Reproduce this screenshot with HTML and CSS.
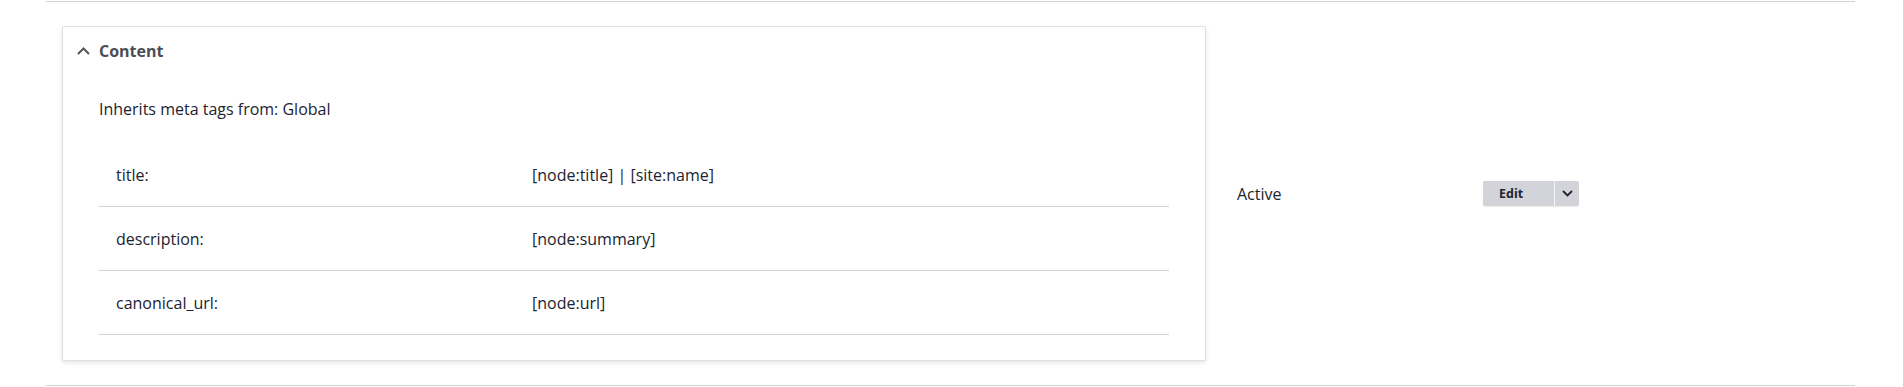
FILE: index.html
```html
<!DOCTYPE html>
<html lang="en">
<head>
<meta charset="utf-8">
<title>Metatag defaults</title>
<link rel="stylesheet" href="styles.css">
</head>
<body>
<div class="row">
  <div class="cell cell-main">
    <div class="details">
      <div class="summary">
        <svg class="caret" width="13" height="8" viewBox="0 0 13 8"><path d="M1 7 L6.5 1.5 L12 7" fill="none" stroke="#55565b" stroke-width="2"/></svg>
        <span>Content</span>
      </div>
      <div class="details-body">
        <p class="inherits">Inherits meta tags from: Global</p>
        <div class="tags">
          <div class="tag-row"><span class="k">title:</span><span class="v">[node:title] | [site:name]</span></div>
          <div class="tag-row"><span class="k">description:</span><span class="v">[node:summary]</span></div>
          <div class="tag-row"><span class="k">canonical_url:</span><span class="v">[node:url]</span></div>
        </div>
      </div>
    </div>
  </div>
  <div class="cell cell-status">Active</div>
  <div class="cell cell-ops">
    <div class="dropbutton">
      <span class="db-main">Edit</span>
      <span class="db-toggle"><svg width="11" height="7" viewBox="0 0 11 7"><path d="M1 1 L5.5 5.5 L10 1" fill="none" stroke="#222330" stroke-width="1.8"/></svg></span>
    </div>
  </div>
</div>
</body>
</html>
```
FILE: styles.css
```css
html, body {
  margin: 0;
  padding: 0;
  background: #fff;
}
body {
  font-family: "Open Sans", "Liberation Sans", sans-serif;
  font-size: 16px;
  color: #222330;
  padding-top: 1px;
}
.row {
  margin: 0 48px 0 46px;
  border-top: 1px solid #d3d4d9;
  border-bottom: 1px solid #d3d4d9;
  display: flex;
  align-items: center;
}
.cell-main {
  padding: 24px 15px 24px 16px;
}
.details {
  width: 1142px;
  border: 1px solid #dedfe4;
  border-radius: 2px;
  box-shadow: 0 2px 4px rgba(0, 0, 0, 0.1);
  background: #fff;
}
.summary {
  display: flex;
  align-items: center;
  height: 48px;
  padding-left: 14px;
  font-weight: 700;
  color: #4c4d57;
  line-height: 24px;
}
.caret {
  margin-right: 9px;
}
.details-body {
  padding: 22px 36px 25px 36px;
}
.inherits {
  margin: 0 0 22px 0;
  line-height: 24px;
}
.tag-row {
  display: grid;
  grid-template-columns: 433px 1fr;
  align-items: center;
  height: 63px;
  border-bottom: 1px solid #d3d4d9;
  line-height: 24px;
}
.tag-row .k {
  padding-left: 17px;
}
.cell-status {
  width: 214px;
  padding: 0 16px;
  line-height: 24px;
}
.cell-ops {
  padding: 0 16px;
}
.dropbutton {
  display: flex;
  height: 25px;
  width: 96px;
  border-radius: 2px;
  background: #d3d4d9;
  box-shadow: 0 1px 1px rgba(0, 0, 0, 0.08);
  overflow: hidden;
}
.db-main {
  width: 55px;
  padding-left: 16px;
  font-size: 12.5px;
  font-weight: 700;
  line-height: 25px;
  color: #222330;
}
.db-toggle {
  width: 24px;
  border-left: 1px solid #f3f4f6;
  display: flex;
  align-items: center;
  justify-content: center;
}
```
